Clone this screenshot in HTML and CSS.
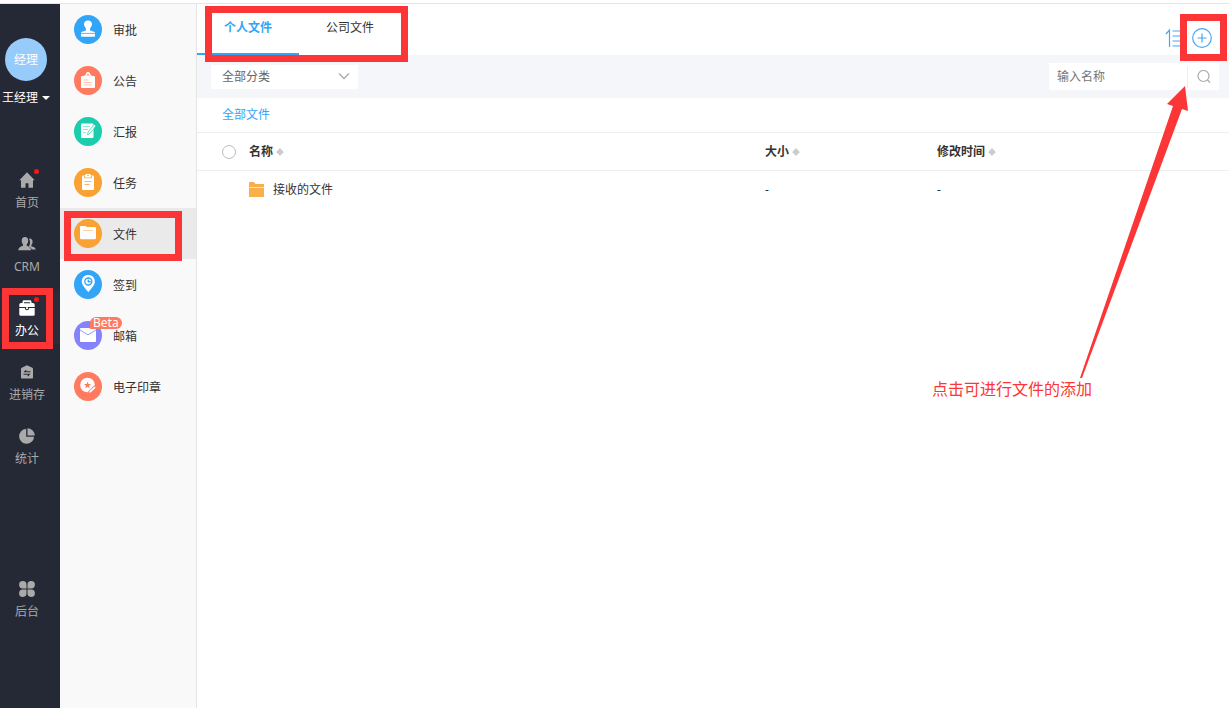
FILE: index.html
```html
<!DOCTYPE html>
<html lang="zh-CN">
<head>
    <meta charset="UTF-8">
    <meta name="viewport" content="width=device-width, initial-scale=1.0">
    <title>文件</title>
    <link rel="stylesheet" href="styles.css">
</head>
<body>
    <div class="app">
        <nav class="rail">
            <div class="avatar">经理</div>
            <button class="user" type="button">王经理 <span class="caret"></span></button>
            <div class="rail-nav">
                <a class="rail-item" href="#">
                    <svg class="rail-icon" viewBox="0 0 16 16"><path d="M8 .3L.3 8.300H2v7.400h4.500v-4.500h3v4.500H14V8.300h1.700z"/></svg>
                    <span class="dot"></span>
                    <span>首页</span>
                </a>
                <a class="rail-item" href="#">
                    <svg class="rail-icon wide" viewBox="0 0 18 16"><path d="M11 2.500c2.300-.4 3.600 1.200 3.600 3.300 0 1.500-.6 2.500-1.300 3.300v1.200c1.800.7 4.300 1.200 4.500 3.200h-4c-.5-1.500-1.700-2.500-3-3 1.500-2 1.800-5.200.2-8z"/><path d="M7 1c2.200 0 3.200 1.600 3.200 3.700 0 1.700-.8 3-1.500 3.700v1.300c2 .8 4.200 1.500 4.400 4.500H.3c.2-3 2.500-3.700 4.700-4.500V8.400C4.300 7.700 3.700 6.400 3.700 4.700 3.700 2.600 4.800 1 7 1z"/></svg>
                    <span>CRM</span>
                </a>
                <a class="rail-item active" href="#">
                    <svg class="rail-icon" viewBox="0 0 16 16"><path fill-rule="evenodd" d="M3.500 3V1.800C3.500.9 4.100.3 5 .3h6c.9 0 1.500.6 1.500 1.500V3H14c1 0 1.700.8 1.700 2v2H.3V5C.3 3.800 1 3 2 3zM5 3.300h6v-1H5z"/><path fill-rule="evenodd" d="M.3 8h5.500c.2 1.500 1 2.200 2.200 2.200s2-.7 2.200-2.200h5.500v6.500c0 .8-.4 1.200-1.200 1.200h-13c-.8 0-1.200-.4-1.200-1.200z"/><circle cx="8" cy="8.200" r="1.100"/></svg>
                    <span class="dot"></span>
                    <span>办公</span>
                    <span class="mark mark-rail"></span>
                </a>
                <a class="rail-item" href="#">
                    <svg class="rail-icon" viewBox="0 0 16 16"><path fill-rule="evenodd" d="M8 1.300l5.300 2.500c.5.300.7.600.7 1.200v8.500c0 .6-.4 1-1 1H3c-.6 0-1-.4-1-1V5c0-.6.2-.9.700-1.200zM4.500 8.300h7v-1H7L7.600 6h-1zM4.500 9.800v1H9l-.7 1.400h1l2.200-2.400z"/></svg>
                    <span>进销存</span>
                </a>
                <a class="rail-item" href="#">
                    <svg class="rail-icon" viewBox="0 0 16 16"><path d="M7.200.8v8h7.900A7.500 7.500 0 1 1 7.200.8z"/><path d="M8.500.3a7.300 7.300 0 0 1 7.300 7.200H8.500z"/></svg>
                    <span>统计</span>
                </a>
            </div>
            <a class="rail-item admin" href="#">
                <svg class="rail-icon" viewBox="0 0 16 16"><path d="M7.500 7.500H4A3.700 3.700 0 1 1 7.500 4zM8.500 7.500V4A3.700 3.700 0 1 1 12 7.500zM7.500 8.500V12A3.700 3.700 0 1 1 4 8.500zM8.500 8.500H12A3.700 3.700 0 1 1 8.500 12z"/></svg>
                <span>后台</span>
            </a>
        </nav>

        <nav class="side">
            <a class="side-item" href="#">
                <span class="badge blue"><svg viewBox="0 0 28 28"><path d="M14 5.500c2.400 0 4 1.600 4 3.800 0 1.500-1 2.700-1.700 3.700-.5.900-.4 2.300.3 2.800l3.400.9c.8.300 1 .9 1 1.500v2.800c0 .5-.3.800-.8.800H7.800c-.5 0-.8-.3-.8-.8v-2.800c0-.6.2-1.200 1-1.500l3.400-.9c.7-.5.8-1.900.3-2.800-.7-1-1.700-2.200-1.700-3.700 0-2.200 1.600-3.800 4-3.800z"/><path class="line" d="M7 18.400h14"/></svg></span>
                <span class="side-text">审批</span>
            </a>
            <a class="side-item" href="#">
                <span class="badge coral"><svg viewBox="0 0 28 28"><path class="line-white" d="M10 11l4-4 4 4"/><rect x="7" y="10" width="14" height="12" rx="1"/><circle cx="14" cy="8" r="2"/><circle class="star" cx="14" cy="8.500" r="0.800"/><path class="line faint" d="M9.500 14h5M9.500 16.500h8M9.500 19h8"/></svg></span>
                <span class="side-text">公告</span>
            </a>
            <a class="side-item" href="#">
                <span class="badge green"><svg viewBox="0 0 28 28"><rect x="7" y="6.500" width="12.500" height="14.500" rx="1"/><path class="line faint" d="M9 9.500h7M9 12.500h5M9 15.500h3"/><path class="pen" d="M20.200 7.500l1.800 1.300-5.800 7.500-2.600 1.500.6-3z"/></svg></span>
                <span class="side-text">汇报</span>
            </a>
            <a class="side-item" href="#">
                <span class="badge orange"><svg viewBox="0 0 28 28"><rect x="8" y="7.500" width="12" height="14.500" rx="1"/><path class="line" d="M10.500 7.500v2.300h7V7.500"/><rect x="11" y="6" width="6" height="3.300" rx="1.500"/><circle class="star" cx="14" cy="7.500" r="0.800"/><path class="line" d="M10.500 13.500h7M10.500 16.500h5"/></svg></span>
                <span class="side-text">任务</span>
            </a>
            <a class="side-item current" href="#">
                <span class="badge orange"><svg viewBox="0 0 28 28"><path d="M6 8.200c0-.7.400-1.200 1.200-1.200h4.300l1.500 1h7.800c.7 0 1.200.4 1.200 1.200v9.800c0 .7-.5 1.200-1.200 1.200H7.200c-.8 0-1.200-.5-1.200-1.200z"/><path class="line faint" d="M9 11.500h10"/></svg></span>
                <span class="side-text">文件</span>
                <span class="mark mark-side"></span>
            </a>
            <a class="side-item" href="#">
                <span class="badge blue"><svg viewBox="0 0 28 28"><path d="M14.300 5c3.700 0 6.500 2.700 6.500 6.400 0 3.900-3.500 6.600-6.500 10.900-3-4.300-6.500-7-6.500-10.900 0-3.700 2.800-6.400 6.500-6.400z"/><circle class="line heavy" cx="14.300" cy="11.500" r="3.500"/><path class="line heavy" d="M14.300 9.500v2.300h2.500"/></svg></span>
                <span class="side-text">签到</span>
            </a>
            <a class="side-item" href="#">
                <span class="badge violet"><svg viewBox="0 0 28 28"><rect x="6" y="7" width="16" height="14" rx="1"/><path class="line" d="M6 9l8 4.800L22 9"/></svg></span>
                <span class="side-text">邮箱</span>
                <span class="beta">Beta</span>
            </a>
            <a class="side-item" href="#">
                <span class="badge coral"><svg viewBox="0 0 28 28"><circle cx="13.500" cy="13" r="7.300"/><path class="star" d="M13.500 9.700l1 2.200 2.500.2-1.900 1.600.6 2.400-2.200-1.200-2.200 1.200.6-2.400-1.900-1.600 2.500-.2z"/><path class="line heavy" d="M14.500 20l5.500-5.500 2.500-1"/><path d="M15 21l.8-2.200 4.700-4.300 1.200 1.300-4.700 4.300z"/></svg></span>
                <span class="side-text">电子印章</span>
            </a>
        </nav>

        <main class="main">
            <header class="header">
                <div class="tabs">
                    <button class="tab selected" type="button">个人文件</button>
                    <button class="tab" type="button">公司文件</button>
                    <span class="mark mark-tabs"></span>
                </div>
                <div class="actions">
                    <button class="icon-btn" type="button" aria-label="排序">
                        <svg viewBox="0 0 20 20"><path d="M4.500 19V2L1 6M7.500 3H20M7.500 8H20M7.500 13H20M7.500 18H20"/></svg>
                    </button>
                    <button class="icon-btn" type="button" aria-label="添加文件">
                        <svg viewBox="0 0 20 20"><circle cx="10" cy="10" r="9.300"/><path d="M10 5.500v9M5.500 10h9"/></svg>
                        <span class="mark mark-add"></span>
                    </button>
                </div>
            </header>

            <div class="toolbar">
                <div class="select-box">
                    <select class="category" aria-label="分类">
                        <option>全部分类</option>
                    </select>
                    <svg class="chevron" viewBox="0 0 12 12"><path d="M1 3.500l5 5 5-5"/></svg>
                </div>
                <form class="search">
                    <input class="search-input" type="text" placeholder="输入名称" aria-label="输入名称">
                    <button class="search-btn" type="button" aria-label="搜索">
                        <svg viewBox="0 0 14 14"><circle cx="6.500" cy="6" r="5.500"/><path d="M10.500 10l2.500 2.500"/></svg>
                    </button>
                </form>
            </div>

            <div class="crumb"><a href="#">全部文件</a></div>

            <table class="files">
                <colgroup>
                    <col class="col-check">
                    <col class="col-name">
                    <col class="col-size">
                    <col>
                </colgroup>
                <thead>
                    <tr>
                        <th class="check-cell"><input class="check" type="checkbox" aria-label="全选"></th>
                        <th>名称<svg class="sort" viewBox="0 0 8 8"><path d="M4 0l3.500 3.700v.6L4 8 .5 4.300v-.6z"/></svg></th>
                        <th>大小<svg class="sort" viewBox="0 0 8 8"><path d="M4 0l3.500 3.700v.6L4 8 .5 4.300v-.6z"/></svg></th>
                        <th>修改时间<svg class="sort" viewBox="0 0 8 8"><path d="M4 0l3.500 3.700v.6L4 8 .5 4.300v-.6z"/></svg></th>
                    </tr>
                </thead>
                <tbody>
                    <tr>
                        <td></td>
                        <td>
                            <a class="file" href="#">
                                <svg class="folder" viewBox="0 0 16 16"><path class="folder-front" d="M0 0h5l1.500 2H15v13H0z"/><path class="folder-back" d="M0 5h15v1H0z"/></svg>
                                接收的文件
                            </a>
                        </td>
                        <td>-</td>
                        <td>-</td>
                    </tr>
                </tbody>
            </table>
        </main>

        <svg class="arrow" viewBox="0 0 110 292"><path d="M105 0l3 25-6-2L2 292H0L93 20l-6-2z"/></svg>
        <p class="tip">点击可进行文件的添加</p>
    </div>
</body>
</html>
```

FILE: styles.css
```css
* {
    box-sizing: border-box;
}
body {
    margin: 0;
    font-family: 'Noto Sans', 'Noto Sans CJK SC', sans-serif;
    font-size: 12px;
    line-height: 18px;
    color: #333;
    background: #fff;
}
a {
    color: inherit;
    text-decoration: none;
}
button,
input,
select {
    font: inherit;
    color: inherit;
    border: none;
    border-radius: 0;
    background: none;
    padding: 0;
    margin: 0;
}
button {
    cursor: pointer;
}
.app {
    position: relative;
    display: flex;
    min-height: calc(100vh - 3px);
    margin-top: 3px;
    border-top: 1px solid #e5e5e5;
}

/* dark rail */
.rail {
    width: 60px;
    flex: none;
    display: flex;
    flex-direction: column;
    background: #252936;
    color: #aaa;
    padding-top: 34px;
}
.avatar {
    width: 42px;
    height: 43px;
    margin-left: 5px;
    border-radius: 50%;
    background: #97cbfb;
    color: #fff;
    line-height: 43px;
    text-align: center;
}
.user {
    display: flex;
    align-items: center;
    gap: 4px;
    margin: 8px 0 0 2px;
    color: #fff;
    white-space: nowrap;
}
.caret {
    border: 4px solid transparent;
    border-top-color: #fff;
    border-bottom: 0;
}
.rail-nav {
    display: flex;
    flex-direction: column;
    gap: 12px;
    padding-top: 57px;
}
.rail-item {
    position: relative;
    display: flex;
    flex-direction: column;
    align-items: center;
    gap: 6px;
    height: 52px;
    padding: 8px 6px 0 0;
}
.rail-item.active {
    color: #fff;
    background: #2a2c3a;
}
.rail-icon {
    width: 16px;
    height: 16px;
    fill: currentColor;
}
.rail-icon.wide {
    width: 18px;
}
.dot {
    position: absolute;
    top: 5px;
    left: 34px;
    width: 5px;
    height: 5px;
    border-radius: 50%;
    background: #f91616;
}
.admin {
    margin-top: 101px;
}

/* module list */
.side {
    width: 137px;
    flex: none;
    background: #f9f9f9;
    border-right: 1px solid #e5e5e5;
}
.side-item {
    position: relative;
    display: flex;
    align-items: center;
    gap: 11px;
    height: 51px;
    padding-left: 14px;
}
.side-item.current {
    background: #eaeaea;
}
.side-text {
    padding-top: 2px;
}
.badge {
    width: 28px;
    height: 29px;
    border-radius: 50%;
    background: currentColor;
}
.badge svg {
    display: block;
    width: 28px;
    height: 28px;
    fill: #fff;
}
.badge .line,
.badge .line-white {
    fill: none;
    stroke: currentColor;
    stroke-width: 0.8;
}
.badge .line-white {
    stroke: #fff;
    stroke-width: 1.4;
}
.badge .heavy {
    stroke-width: 1.4;
}
.badge .faint {
    opacity: 0.6;
}
.badge .star {
    fill: currentColor;
}
.badge .pen {
    stroke: currentColor;
    stroke-width: 0.7;
}
.blue { color: #32a5f9; }
.coral { color: #ff7a5e; }
.green { color: #1bcdac; }
.orange { color: #f9a233; }
.violet { color: #8583fb; }
.beta {
    position: absolute;
    top: 7px;
    left: 30px;
    padding: 0 3px;
    border-radius: 6px 6px 6px 0;
    background: #ff7a5e;
    color: #fff;
    line-height: 12px;
}

/* content */
.main {
    flex: 1;
    min-width: 0;
}
.header {
    display: flex;
    justify-content: space-between;
    height: 51px;
}
.tabs {
    position: relative;
    display: flex;
}
.tab {
    width: 102px;
    border-bottom: 2px solid transparent;
    padding-bottom: 2px;
}
.tab.selected {
    color: #32a5f9;
    font-weight: bold;
    border-color: #32a5f9;
}
.actions {
    display: flex;
    align-items: center;
    gap: 7px;
    padding: 17px 17px 0 0;
}
.icon-btn {
    position: relative;
    width: 20px;
    height: 20px;
}
.icon-btn svg {
    display: block;
    fill: none;
    stroke: #46a4f5;
    stroke-width: 1.2;
}
.toolbar {
    display: flex;
    align-items: center;
    justify-content: space-between;
    height: 43px;
    padding: 0 10px 0 14px;
    background: #f5f6fa;
}
.select-box {
    position: relative;
    width: 147px;
}
.category {
    display: block;
    width: 100%;
    height: 24px;
    padding-left: 11px;
    background: #fff;
    color: #666;
    appearance: none;
}
.chevron {
    position: absolute;
    top: 5px;
    right: 8px;
    width: 12px;
    height: 12px;
    fill: none;
    stroke: #aaa;
    stroke-width: 1.3;
    pointer-events: none;
}
.search {
    display: flex;
    align-items: center;
    width: 170px;
    height: 27px;
    background: #fff;
}
.search-input {
    flex: 1;
    min-width: 0;
    height: 27px;
    padding-left: 8px;
    outline: none;
}
.search-input::placeholder {
    color: #757575;
}
.search-btn {
    display: flex;
    align-items: center;
    justify-content: center;
    width: 32px;
    height: 22px;
    border-left: 1px solid #eee;
}
.search-btn svg {
    width: 14px;
    height: 14px;
    fill: none;
    stroke: #aaa;
    stroke-width: 1.2;
}
.crumb {
    padding: 8px 25px;
    color: #32a5f9;
    border-bottom: 1px solid #eee;
}
.files {
    width: 100%;
    table-layout: fixed;
    border-spacing: 0;
}
.col-check { width: 52px; }
.col-name { width: 50%; }
.col-size { width: 172px; }
.files th,
.files td {
    height: 38px;
    padding: 0;
    text-align: left;
    vertical-align: middle;
}
.files th {
    border-bottom: 1px solid #eee;
}
.files .check-cell {
    padding-left: 25px;
}
.check {
    display: block;
    width: 14px;
    height: 14px;
    border: 1px solid #bbb;
    border-radius: 50%;
    appearance: none;
}
.check:checked {
    background: #32a5f9;
}
.sort {
    width: 8px;
    height: 8px;
    margin-left: 3px;
    fill: #ccc;
}
.file {
    display: flex;
    align-items: center;
    gap: 8px;
}
.folder {
    width: 16px;
    height: 16px;
}
.folder-back { fill: #fde0b8; }
.folder-front { fill: #f9b04b; }

/* red guide marks */
.mark {
    position: absolute;
    border: 7px solid #fc3636;
    pointer-events: none;
    z-index: 1;
}
.mark-rail {
    top: -4px;
    left: 2px;
    width: 51px;
    height: 61px;
}
.mark-side {
    top: 3px;
    left: 4px;
    width: 118px;
    height: 50px;
}
.mark-tabs {
    top: 2px;
    left: 8px;
    width: 203px;
    height: 56px;
}
.mark-add {
    top: -14px;
    left: -12px;
    width: 47px;
    height: 47px;
}
.arrow {
    position: absolute;
    top: 82px;
    right: 39px;
    width: 110px;
    height: 292px;
    fill: #fc3636;
    pointer-events: none;
}
.tip {
    position: absolute;
    top: 373px;
    right: 137px;
    margin: 0;
    font-size: 16px;
    line-height: 24px;
    color: #fc3636;
}
```
